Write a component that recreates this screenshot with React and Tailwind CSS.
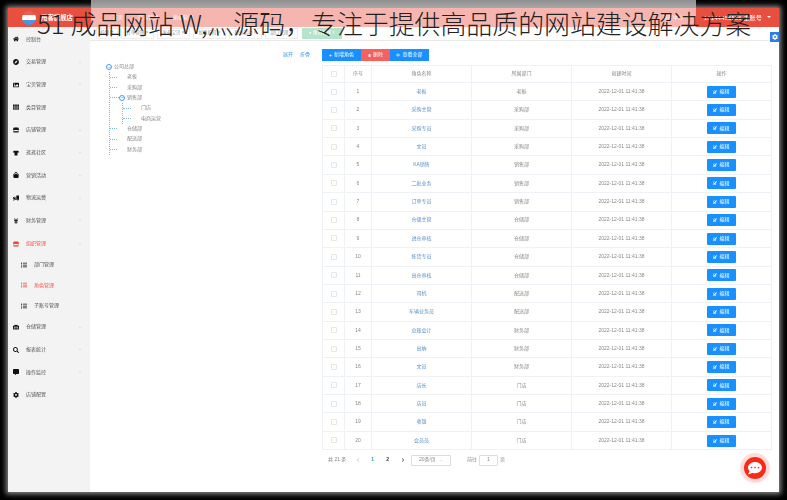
import React from "react";
import { FaHome, FaCompass, FaImage, FaTh, FaStore, FaTshirt, FaShoppingBag, FaTruckLoading, FaYenSign, FaListUl, FaWarehouse, FaSearch, FaCommentAlt, FaCog, FaChevronDown, FaChevronUp, FaChevronLeft, FaChevronRight, FaPlus, FaTrashAlt, FaEdit, FaCommentDots, FaMinus, FaRegEye } from "react-icons/fa";

const font = { fontFamily: '"Liberation Sans","Noto Sans CJK SC",sans-serif' };

const menu = [
  [FaHome, "控制台", 0, 0],
  [FaCompass, "交易管理", 1, 0],
  [FaImage, "宝贝管理", 1, 0],
  [FaTh, "类目管理", 0, 0],
  [FaStore, "店铺管理", 1, 0],
  [FaTshirt, "逛逛社区", 1, 0],
  [FaShoppingBag, "营销活动", 1, 0],
  [FaTruckLoading, "物流运费", 1, 0],
  [FaYenSign, "财务管理", 1, 0],
  [FaStore, "组织管理", 2, 1],
];
const menu2 = [
  [FaWarehouse, "仓储管理", 1, 0],
  [FaSearch, "报表统计", 1, 0],
  [FaCommentAlt, "操作监控", 1, 0],
  [FaCog, "店铺配置", 0, 0],
];
const subs = [["部门管理", 0], ["角色管理", 1], ["子账号管理", 0]];
const tabs = [
  ["控制台", "w-[22px]"], ["订单管理 ×", "w-[33px]"], ["发布宝贝 ×", "w-[33px]"], ["优惠折扣 ×", "w-[33px]"],
  ["秒杀活动 ×", "w-[33px]"], ["部门管理 ×", "w-[33px]"],
];
const rows = [
  ["老板", "老板"], ["采购主管", "采购部"], ["采购专员", "采购部"], ["文员", "采购部"], ["KA销售", "销售部"],
  ["二批业务", "销售部"], ["订单专员", "销售部"], ["仓储主管", "仓储部"], ["进仓审核", "仓储部"], ["拣货专员", "仓储部"],
  ["出仓审核", "仓储部"], ["司机", "配送部"], ["车辆业务员", "配送部"], ["总账会计", "财务部"], ["出纳", "财务部"],
  ["文员", "财务部"], ["店长", "门店"], ["店员", "门店"], ["收银", "门店"], ["会员员", "门店"],
];

function MenuItem({ item }) {
  const [Icon, label, arrow, active] = item;
  return (
    <div className={`h-[22.7px] flex items-center pl-[5px] pr-[8px] ${active ? "text-[#ee5a50]" : "text-[#555]"}`}>
      <Icon className={`w-[6px] h-[6px] shrink-0 ${active ? "text-[#ee4238]" : "text-[#111]"}`} />
      <span className="ml-[7px] flex-1 text-[5px]">{label}</span>
      {arrow === 1 && <FaChevronDown className="w-[4px] h-[3px] text-[#cfcfcf]" />}
      {arrow === 2 && <FaChevronUp className="w-[4px] h-[3px] text-[#cfcfcf]" />}
    </div>
  );
}

function Minus() {
  return (
    <span className="w-[6px] h-[6px] mr-[2px] rounded-full border-[0.5px] border-[#409eff] flex items-center justify-center">
      <FaMinus className="w-[3px] h-[3px] text-[#409eff]" />
    </span>
  );
}

function TreeRow({ label, minus, branch, sub }) {
  return (
    <div className="h-[10.35px] flex items-center text-[5px] text-[#888]">
      {branch && (
        <span className={`${minus ? "w-[9px]" : sub ? "w-[8px] mr-[10px]" : "w-[7px] mr-[10px]"} border-t border-dotted border-[#7db9e8]`} />
      )}
      {minus && <Minus />}
      <span>{label}</span>
    </div>
  );
}

export default function App() {
  return (
    <div className="relative w-[787px] h-[500px] overflow-hidden bg-black p-[8px]" style={font}>
      <div className="w-[771px] h-[484px] bg-white flex flex-col blur-[0.55px] shadow-[0_0_5px_2px_rgba(255,255,255,0.55)]">
        <header className="h-[19px] shrink-0 bg-[#e94f3f] flex items-center text-white text-[5px]">
          <div className="w-[82px] flex items-center pl-[14px] gap-[5px]">
            <span className="w-[14px] h-[14px] rounded-full overflow-hidden flex flex-col">
              <span className="flex-1 bg-[#ee5b50]" />
              <span className="flex-1 bg-white" />
              <span className="flex-1 bg-[#4d93e6]" />
            </span>
            <b className="text-[6.4px] whitespace-nowrap">甩客旗舰店</b>
          </div>
          <nav className="flex gap-[15px] ml-[23px]">
            <span>首页</span><span>交易管理</span><span>角色管理</span>
          </nav>
          <div className="ml-auto flex items-center pr-[8px]">
            <span className="mr-[21px]">商家中心</span>
            <span className="text-[6.2px]">13144455556 主账号</span>
            <span className="ml-[5px] w-0 h-0 border-x-[2px] border-x-transparent border-t-[2px] border-t-white" />
          </div>
        </header>
        <div className="flex flex-1 min-h-0">
          <aside className="w-[82px] shrink-0 bg-[#f3f3f3] pt-[1px]">
            {menu.map((m) => <MenuItem key={m[1]} item={m} />)}
            {subs.map(([s, a]) => (
              <div key={s} className={`h-[20.3px] flex items-center pl-[13px] text-[5px] ${a ? "text-[#ee5a50]" : "text-[#555]"}`}>
                <FaListUl className={`w-[6px] h-[6px] ${a ? "text-[#ee4238]" : "text-[#111]"}`} />
                <span className="ml-[7px]">{s}</span>
              </div>
            ))}
            {menu2.map((m) => <MenuItem key={m[1]} item={m} />)}
          </aside>
          <main className="flex-1 flex flex-col min-w-0">
            <div className="h-[14px] shrink-0 border-b border-[#e9e9e9] flex items-center pl-[6px] gap-[3px] text-[4.5px] text-[#999]">
              {tabs.map(([t, w]) => (
                <span key={t} className={`${w} h-[11px] border-[0.5px] border-[#eee] flex items-center justify-center whitespace-nowrap`}>{t}</span>
              ))}
              <span className="w-[40px] h-[11px] ml-[1px] bg-[#b5e3cc] text-white flex items-center justify-center whitespace-nowrap">● 角色管理 ×</span>
            </div>
            <div className="flex flex-1 min-h-0">
              <section className="w-[225px] shrink-0 pt-[10px] pl-[16px] pr-[5px]">
                <div className="flex justify-end gap-[7px] text-[5px] text-[#409eff] h-[8px] items-center">
                  <span>展开</span><span>折叠</span>
                </div>
                <div className="mt-[3px]">
                  <TreeRow label="公司总部" minus />
                  <div className="ml-[3px] mb-[5px] mt-[-0.5px] border-l border-dotted border-[#7db9e8]">
                    <TreeRow label="老板" branch />
                    <TreeRow label="采购部" branch />
                    <TreeRow label="销售部" branch minus />
                    <div className="ml-[12px]">
                      <div className="border-l border-dotted border-[#7db9e8]">
                        <TreeRow label="门店" branch sub />
                        <TreeRow label="电商运营" branch sub />
                      </div>
                    </div>
                    <TreeRow label="仓储部" branch />
                    <TreeRow label="配送部" branch />
                    <TreeRow label="财务部" branch />
                  </div>
                </div>
              </section>
              <section className="flex-1 min-w-0 pl-[7px] pr-[8px] pt-[8px]">
                <div className="flex h-[12px] text-white text-[5px]">
                  <span className="w-[39px] bg-[#1890ff] flex items-center justify-center gap-[2px]"><FaPlus className="w-[3px] h-[3px]" />新增角色</span>
                  <span className="w-[29px] bg-[#f56060] flex items-center justify-center gap-[2px]"><FaTrashAlt className="w-[3px] h-[3px]" />删除</span>
                  <span className="w-[39px] bg-[#1890ff] flex items-center justify-center gap-[2px]"><FaRegEye className="w-[4px] h-[4px]" />查看全部</span>
                </div>
                <table className="mt-[4px] w-[449px] table-fixed border-collapse text-[5px] text-[#888] text-center">
                  <colgroup>
                    <col className="w-[22px]" /><col className="w-[27px]" /><col className="w-[100px]" /><col className="w-[100px]" /><col className="w-[100px]" /><col className="w-[100px]" />
                  </colgroup>
                  <thead>
                    <tr className="h-[17px]">
                      <th className="border border-[#eef1f6] font-normal"><span className="inline-block w-[6px] h-[6px] border border-[#e6e6e6] rounded-[1px] align-middle" /></th>
                      {["序号", "角色名称", "所属部门", "创建时间", "操作"].map((h) => (
                        <th key={h} className="border border-[#eef1f6] font-normal">{h}</th>
                      ))}
                    </tr>
                  </thead>
                  <tbody>
                    {rows.map(([r, d], i) => (
                      <tr key={i} className="h-[18.37px]">
                        <td className="border border-[#eef1f6]"><span className="inline-block w-[6px] h-[6px] border border-[#e6e6e6] rounded-[1px] align-middle" /></td>
                        <td className="border border-[#eef1f6]">{i + 1}</td>
                        <td className="border border-[#eef1f6] text-[#5a8fc7]">{r}</td>
                        <td className="border border-[#eef1f6]">{d}</td>
                        <td className="border border-[#eef1f6]">2022-12-01 11:41:38</td>
                        <td className="border border-[#eef1f6]">
                          <span className="inline-flex w-[29px] h-[12px] bg-[#1890ff] text-white items-center justify-center gap-[2px] rounded-[1px] align-middle">
                            <FaEdit className="w-[4px] h-[4px]" />编辑
                          </span>
                        </td>
                      </tr>
                    ))}
                  </tbody>
                </table>
                <div className="mt-[4px] h-[12px] flex items-center text-[5px] text-[#888] pl-[6px]">
                  <span>共 21 条</span>
                  <FaChevronLeft className="ml-[10px] w-[4px] h-[4px] text-[#c4c4c4]" />
                  <b className="ml-[11px] text-[#1890ff]">1</b>
                  <b className="ml-[12px] text-[#333]">2</b>
                  <FaChevronRight className="ml-[12px] w-[4px] h-[4px] text-[#555]" />
                  <span className="ml-[6px] w-[40px] h-[11px] border-[0.5px] border-[#ddd] rounded-[1px] flex items-center justify-between px-[7px]">20条/页<FaChevronDown className="w-[3px] h-[3px] text-[#ccc]" /></span>
                  <span className="ml-[16px]">前往</span>
                  <span className="ml-[2px] w-[19px] h-[11px] border-[0.5px] border-[#ddd] rounded-[1px] flex items-center justify-center">1</span>
                  <span className="ml-[2px]">页</span>
                </div>
              </section>
            </div>
          </main>
        </div>
      </div>
      <div className="absolute left-[91px] top-0 w-[605px] h-[27px] bg-[linear-gradient(to_bottom,#8f8f8f_0,#a8a8a8_8px,rgba(255,255,255,0.58)_8px)]" />
      <span className="absolute right-[8px] top-[32px] w-[9px] h-[10px] bg-[#2f7de1] flex items-center justify-center text-white blur-[0.4px]"><FaCog className="w-[6px] h-[6px]" /></span>
      <span className="absolute left-[740px] top-[453px] w-[30px] h-[30px] rounded-full bg-[#ffdcd9] flex items-center justify-center blur-[0.3px]">
        <span className="w-[22px] h-[22px] rounded-full bg-[#fb2a17] flex items-center justify-center text-white">
          <FaCommentDots className="w-[14px] h-[14px]" />
        </span>
      </span>
      <div className="absolute left-[37px] top-[3px] text-[25.9px] leading-[40px] font-light text-[#222] whitespace-nowrap" style={{ fontFamily: '"Noto Sans CJK SC",sans-serif' }}>
        51 成品网站 W,灬源码，专注于提供高品质的网站建设解决方案
      </div>
    </div>
  );
}
